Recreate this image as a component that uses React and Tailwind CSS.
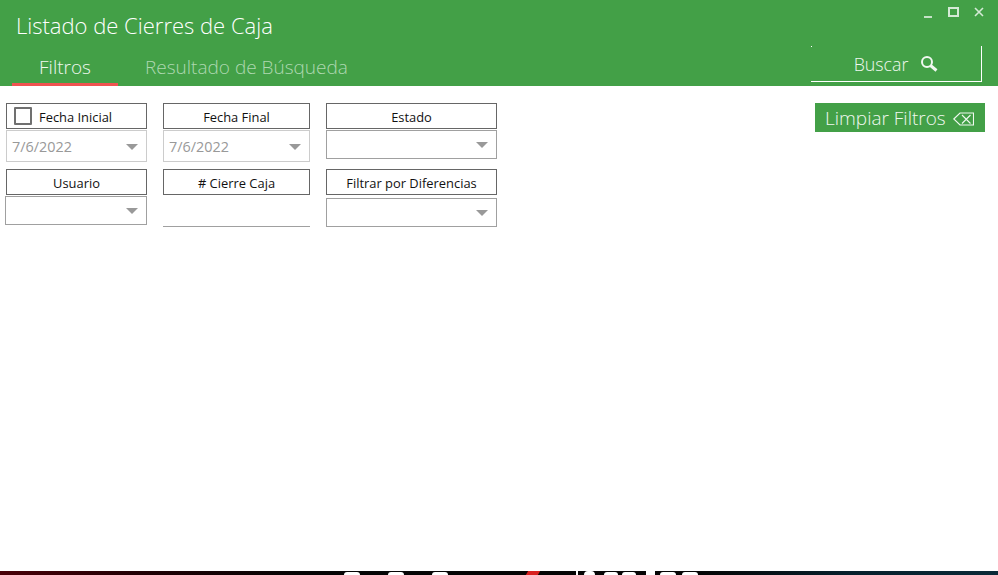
import React from "react";

const font = { fontFamily: '"Open Sans", "Noto Sans", sans-serif' };

function Label({ children, className = "" }) {
  return (
    <div className={`h-[26px] border border-[#666] bg-white flex items-center justify-center pt-[3px] text-[12.9px] text-[#111] ${className}`}>
      {children}
    </div>
  );
}

function Arrow() {
  return (
    <svg width="12" height="6" viewBox="0 0 12 6" className="shrink-0">
      <path d="M0 0H12L6 6Z" fill="#999" />
    </svg>
  );
}

function Select({ value, light, className = "" }) {
  return (
    <div className={`border flex items-center justify-between pl-[5px] pr-[8px] pt-px text-[14.4px] text-[#999] ${light ? "border-[#ccc]" : "border-[#a0a0a0]"} ${className}`}>
      <span>{value}</span>
      <Arrow />
    </div>
  );
}

function Dot({ className }) {
  return <span className={`absolute bottom-0 ${className}`} />;
}

export default function App() {
  return (
    <div className="w-[998px] h-[575px] bg-white flex flex-col overflow-hidden" style={font}>
      <header className="h-[86px] shrink-0 bg-[#43a047] flex flex-col relative">
        <div className="absolute right-[14px] top-[6px] flex items-center gap-[15px]">
          <svg width="9" height="12" viewBox="0 0 9 12"><rect x="0" y="10" width="8" height="2" fill="#c5e2c7" /></svg>
          <svg width="11" height="10" viewBox="0 0 11 10"><rect x="1" y="1" width="9" height="8" fill="none" stroke="#d5ead6" strokeWidth="2" /></svg>
          <svg width="10" height="10" viewBox="0 0 10 10"><path d="M1 1L9 9M9 1L1 9" stroke="#d5ead6" strokeWidth="1.6" /></svg>
        </div>
        <div className="pl-4 pt-[11px] text-[22px] font-light leading-[29px] text-white">Listado de Cierres de Caja</div>
        <div className="flex-1 flex items-end justify-between pl-3 pr-4">
          <div className="flex items-end">
            <div className="w-[106px] h-[31px] border-b-[3px] border-[#ef5350] text-center text-[19px] font-light leading-[24px] text-[#f0f8f0]">Filtros</div>
            <div className="ml-[27px] h-[31px] text-[19px] font-light leading-[24px] text-[#aed8b1]">Resultado de Búsqueda</div>
          </div>
          <div className="w-[171px] h-[36px] mb-[4px] pt-px border-b border-r border-white flex items-center justify-center gap-[12px] text-[17.8px] font-light text-[#f0f8f0] relative">
            <span className="absolute left-0 top-0 w-px h-px bg-white" />
            <span>Buscar</span>
            <svg width="18" height="18" viewBox="0 0 18 18" fill="none" stroke="#f0f8f0">
              <circle cx="7" cy="7" r="5" strokeWidth="2" />
              <path d="M10.5 10.5L16.5 15.5" strokeWidth="3" />
            </svg>
          </div>
        </div>
      </header>

      <main className="flex-1 flex justify-between pl-[5px] pr-[13px] pt-[17px]">
        <div className="flex gap-4">
          <div className="w-[142px]">
            <Label className="ml-px !justify-start pl-[7px] gap-[7px]">
              <span className="-mt-[3px] w-[18px] h-[18px] border-2 border-[#707070] rounded-[1px] bg-white" />
              Fecha Inicial
            </Label>
            <Select value="7/6/2022" light className="ml-px mt-px h-[32px]" />
            <Label className="ml-px mt-[7px]">Usuario</Label>
            <Select className="mt-px h-[29px]" />
          </div>
          <div className="w-[147px]">
            <Label>Fecha Final</Label>
            <Select value="7/6/2022" light className="mt-px h-[32px]" />
            <Label className="mt-[7px]">{"# Cierre Caja"}</Label>
            <div className="mt-px h-[31px] border-b border-[#a0a0a0]" />
          </div>
          <div className="w-[171px]">
            <Label>Estado</Label>
            <Select className="mt-px h-[29px]" />
            <Label className="mt-[10px]">Filtrar por Diferencias</Label>
            <Select className="mt-[3px] h-[29px]" />
          </div>
        </div>
        <div className="w-[170px] h-[29px] pt-[2px] bg-[#43a047] flex items-center pl-[10px] gap-[7px] text-[19px] font-light text-[#f0f8f0]">
          <span>Limpiar Filtros</span>
          <svg width="21" height="14" viewBox="0 0 21 14" fill="none" stroke="#f0f8f0" strokeWidth="1.1">
            <path d="M0.8 7L7 1H20.5V13H7Z" />
            <path d="M9 3L17.5 11.5M17.5 3L9 11.5" />
          </svg>
        </div>
      </main>

      <footer className="h-1 shrink-0 relative overflow-hidden bg-[linear-gradient(to_right,#4a0008_0%,#200004_14%,#050505_30%,#050505_70%,#06202c_85%,#0a2a38_100%)]">
        <Dot className="left-[344px] w-[16px] h-[3px] rounded-t-[8px] bg-white" />
        <Dot className="left-[388px] w-[16px] h-[3px] rounded-t-[8px] bg-white" />
        <Dot className="left-[432px] w-[16px] h-[3px] rounded-t-[8px] bg-white" />
        <Dot className="left-[527px] w-[12px] h-[4px] -skew-x-[30deg] bg-[#d82020]" />
        <Dot className="left-[576px] w-[2px] h-[4px] bg-white" />
        <Dot className="left-[584px] w-[11px] h-[4px] rounded-t-sm bg-white" />
        <Dot className="left-[604px] w-[14px] h-[3px] rounded-t-sm bg-white" />
        <Dot className="left-[622px] w-[14px] h-[3px] rounded-t-sm bg-white" />
        <Dot className="left-[646px] w-[9px] h-[4px] bg-white" />
        <Dot className="left-[660px] w-[16px] h-[3px] rounded-t-sm bg-white" />
        <Dot className="left-[682px] w-[16px] h-[3px] rounded-t-sm bg-white" />
      </footer>
    </div>
  );
}
